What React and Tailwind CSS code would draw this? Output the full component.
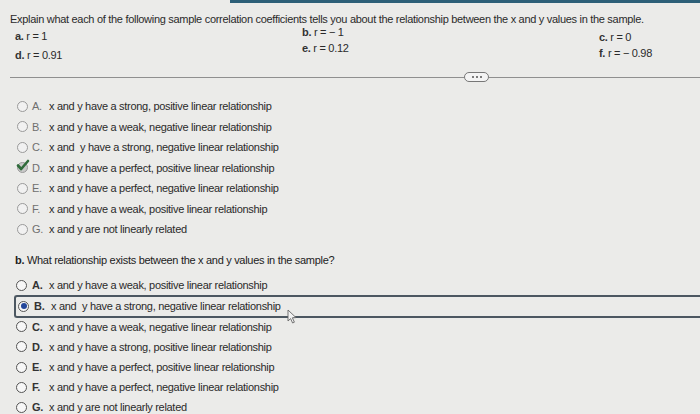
import { useState } from "react"

const partA = [
  { key: "A", text: "x and y have a strong, positive linear relationship" },
  { key: "B", text: "x and y have a weak, negative linear relationship" },
  { key: "C", text: "x and  y have a strong, negative linear relationship" },
  { key: "D", text: "x and y have a perfect, positive linear relationship" },
  { key: "E", text: "x and y have a perfect, negative linear relationship" },
  { key: "F", text: "x and y have a weak, positive linear relationship" },
  { key: "G", text: "x and y are not linearly related" },
]

const partB = [
  { key: "A", text: "x and y have a weak, positive linear relationship" },
  { key: "B", text: "x and  y have a strong, negative linear relationship" },
  { key: "C", text: "x and y have a weak, negative linear relationship" },
  { key: "D", text: "x and y have a strong, positive linear relationship" },
  { key: "E", text: "x and y have a perfect, positive linear relationship" },
  { key: "F", text: "x and y have a perfect, negative linear relationship" },
  { key: "G", text: "x and y are not linearly related" },
]

export default function App() {
  const [answer, setAnswer] = useState("B")

  return (
    <div
      className="relative w-[700px] h-[414px] overflow-hidden bg-[#ebebe9] text-[#2a2a2a] text-[11px] tracking-[-0.3px]"
      style={{ fontFamily: '"Liberation Sans", Arial, sans-serif' }}
    >
      <div className="absolute top-0 right-0 w-[470px] h-[3px] bg-[#2d5f78]" />

      <div className="pt-[12px] pl-[10px] leading-[14px]">
        Explain what each of the following sample correlation coefficients tells you about the relationship between the x and y values in the sample.
      </div>

      <div className="flex leading-[14px]">
        <div className="w-[301px] pl-[15px] pt-[3px] flex flex-col gap-[5px]">
          <Coef label="a." value="r = 1" />
          <Coef label="d." value="r = 0.91" />
        </div>
        <div className="w-[298px] pl-[1px] flex flex-col gap-[2px] -mt-[1px]">
          <Coef label="b." value="r = − 1" />
          <Coef label="e." value="r = 0.12" />
        </div>
        <div className="flex-1 flex flex-col gap-[2px] pt-[4px]">
          <Coef label="c." value="r = 0" />
          <Coef label="f." value="r = − 0.98" />
        </div>
      </div>

      <div className="flex items-center pl-[10px] mt-[9px] h-[12px]">
        <div className="w-[454px] h-px bg-[#8f8f8f]" />
        <div className="w-[25px] h-[10px] rounded-full border border-[#777] bg-[#f4f4f4] flex items-center justify-center gap-[2px]">
          <span className="w-[2px] h-[2px] rounded-full bg-[#555]" />
          <span className="w-[2px] h-[2px] rounded-full bg-[#555]" />
          <span className="w-[2px] h-[2px] rounded-full bg-[#555]" />
        </div>
        <div className="flex-1 h-px bg-[#8f8f8f]" />
      </div>

      <div className="pl-[17px] pt-[13px]">
        {partA.map((o) => (
          <div key={o.key} className="h-[20.5px] flex items-center">
            {o.key === "D" ? <CheckedRadio /> : <Radio light />}
            <span className="ml-[4px] w-[17px] text-[#6f6f6f]">{o.key}.</span>
            <span className="whitespace-pre">{o.text}</span>
          </div>
        ))}
      </div>

      <div className="pl-[15px] pt-[13px] leading-[14px] text-[#222]">
        <span className="font-bold">b.</span> What relationship exists between the x and y values in the sample?
      </div>

      <div className="pt-[9px]">
        {partB.map((o) => {
          const selected = answer === o.key
          return (
            <div
              key={o.key}
              onClick={() => setAnswer(o.key)}
              className={
                selected
                  ? "h-[23px] ml-[14px] pl-[2px] flex items-center border-2 border-r-0 border-[#4c5761] rounded-l-[3px] -my-[1px]"
                  : "h-[20.2px] ml-[16px] flex items-center"
              }
            >
              <Radio checked={selected} />
              <span className="ml-[5px] w-[17px] font-bold text-[#333]">{o.key}.</span>
              <span className="whitespace-pre">{o.text}</span>
            </div>
          )
        })}
      </div>

      <svg className="absolute left-[287px] top-[309px]" width="11" height="15" viewBox="0 0 11 15">
        <path d="M1 1 L1 12 L3.6 9.6 L5.6 14 L7.4 13.2 L5.4 8.8 L9 8.6 Z" fill="#f2f2f2" stroke="#666" strokeWidth="0.9" strokeLinejoin="round" />
      </svg>
    </div>
  )
}

function Coef({ label, value }) {
  return (
    <div>
      <span className="font-bold text-[#333]">{label}</span> {value}
    </div>
  )
}

function Radio({ light, checked }) {
  return (
    <span
      className={
        "w-[11px] h-[11px] rounded-full border flex items-center justify-center shrink-0 " +
        (light ? "border-[#9a9a9a] bg-[#f1f1f1]" : "border-[#555] bg-[#f7f7f7]")
      }
    >
      {checked && <span className="w-[6px] h-[6px] rounded-full bg-[#23469a]" />}
    </span>
  )
}

function CheckedRadio() {
  return (
    <span className="relative w-[11px] h-[11px] shrink-0">
      <span className="absolute inset-0 rounded-full border border-[#9a9a9a] bg-[#c9c9c9]" />
      <svg className="absolute -left-[1px] -top-[3px]" width="14" height="13" viewBox="0 0 14 13">
        <path d="M2 6.5 L5.2 10 L12 2" fill="none" stroke="#2f6b3a" strokeWidth="2.6" strokeLinecap="round" strokeLinejoin="round" />
      </svg>
    </span>
  )
}
